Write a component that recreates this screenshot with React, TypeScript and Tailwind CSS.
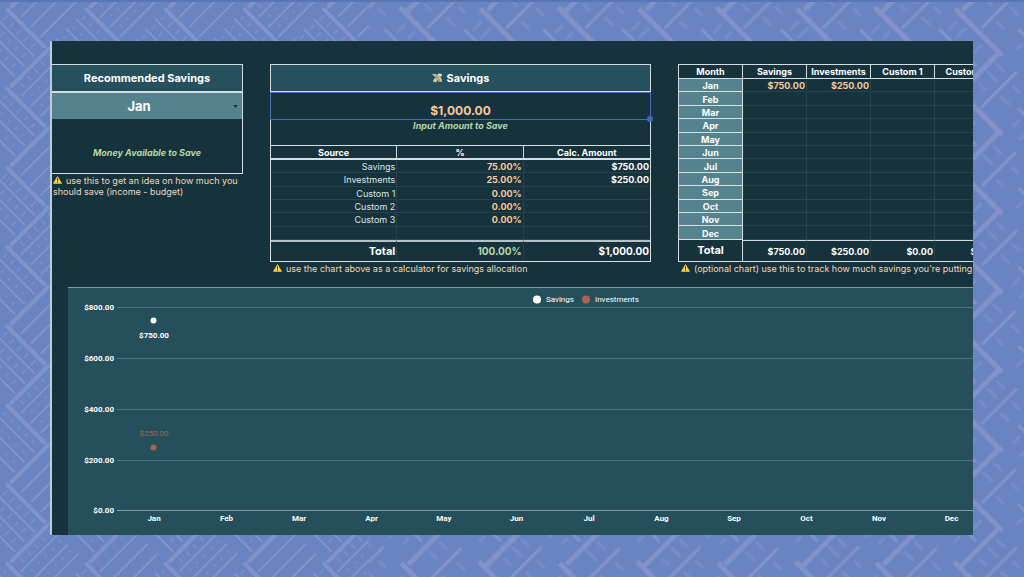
import { useState } from 'react';

const months = ['Jan', 'Feb', 'Mar', 'Apr', 'May', 'Jun', 'Jul', 'Aug', 'Sep', 'Oct', 'Nov', 'Dec'];

type Source = {
    name: string;
    percent: string;
    amount: string;
};

const sources: Source[] = [
    { name: 'Savings', percent: '75.00%', amount: '$750.00' },
    { name: 'Investments', percent: '25.00%', amount: '$250.00' },
    { name: 'Custom 1', percent: '0.00%', amount: '' },
    { name: 'Custom 2', percent: '0.00%', amount: '' },
    { name: 'Custom 3', percent: '0.00%', amount: '' },
    { name: '', percent: '', amount: '' },
];

const trackerColumns = [
    { name: 'Savings', jan: '$750.00', total: '$750.00' },
    { name: 'Investments', jan: '$250.00', total: '$250.00' },
    { name: 'Custom 1', jan: '', total: '$0.00' },
    { name: 'Custom 2', jan: '', total: '$0.00' },
];

const yTicks = [
    { label: '$800.00', y: 19 },
    { label: '$600.00', y: 70 },
    { label: '$400.00', y: 121 },
    { label: '$200.00', y: 172 },
    { label: '$0.00', y: 222 },
];

function WeaveBackground() {
    const bars = [3, 17, 31, 45];
    const steps = [6, 16, 26, 36, 46];

    return (
        <svg className="absolute inset-0 h-full w-full" aria-hidden="true">
            <defs>
                {/* dense weave on the left */}
                <pattern id="weave" width="112" height="112" patternUnits="userSpaceOnUse" patternTransform="translate(8 4) rotate(45)">
                    <g stroke="#8193ca" strokeLinecap="round" fill="none">
                        {bars.map((b, i) => (
                            <g key={b} strokeWidth={i === 0 ? 4 : 2}>
                                <path d={`M2 ${b}H54`} />
                                <path d={`M58 ${b + 56}H110`} />
                                <path d={`M${b + 56} 2V54`} />
                                <path d={`M${b} 58V110`} />
                            </g>
                        ))}
                        {steps.map((s) => (
                            <g key={s} strokeWidth="2" stroke="#7a8fca">
                                <path d={`M${s} 8v5M${s} 22v4M${s} 36v4`} />
                                <path d={`M${s + 56} 65v3M${s + 56} 80v1M${s + 56} 94v1`} />
                                <path d={`M64 ${s}h4M79 ${s}h1M93 ${s}h1`} />
                            </g>
                        ))}
                    </g>
                </pattern>
                {/* wider spacing with short rungs on the right */}
                <pattern id="rungs" width="112" height="112" patternUnits="userSpaceOnUse" patternTransform="translate(8 4) rotate(45)">
                    <g stroke="#8193ca" strokeLinecap="round" fill="none">
                        <path d="M0 4H64M56 60H120M-56 60H8M62 4V56M6 60V110" strokeWidth="5" />
                        <path d="M4 30H54M60 86H110M88 6V54M32 64V110" strokeWidth="3" />
                        <path
                            d="M10 13v10M21 11v12M33 16v8M44 12v10M12 38v8M26 40v10M40 38v7M70 70v9M82 68v7M94 70v8M72 94v7M86 96v8M100 94v6M69 14h9M68 26h12M71 40h7M96 18h8M95 34h10M13 74h9M12 88h11M40 76h9M39 96h8"
                            strokeWidth="3"
                            stroke="#788eca"
                        />
                    </g>
                </pattern>
            </defs>
            <rect width="36%" height="100%" fill="url(#weave)" />
            <rect x="36%" width="64%" height="100%" fill="url(#rungs)" />
        </svg>
    );
}

function WarningIcon() {
    return (
        <svg viewBox="0 0 20 18" className="mr-1 inline-block h-2 w-[9px] align-baseline" aria-hidden="true">
            <path d="M10 1.5 18.8 16.5H1.2Z" fill="#fbd04b" stroke="#fbd04b" strokeWidth="2" strokeLinejoin="round" />
            <path d="M10 6v5" stroke="#33383b" strokeWidth="2.2" strokeLinecap="round" />
            <circle cx="10" cy="14.2" r="1.3" fill="#33383b" />
        </svg>
    );
}

function FlyingMoneyIcon() {
    return (
        <svg viewBox="0 0 24 22" className="h-[10px] w-[11px]" aria-hidden="true">
            <path d="M1 2 9 3l3 5-5 1-2-2 1-1-4-1ZM14 1l8 1-1 5-6 3-3-4Z" fill="#d9dfd2" />
            <path d="M2 17l5-7 5 4-3 7-4-2-1 2ZM15 12l7 3-1 5-6-1-3-4Z" fill="#c4cdb9" />
            <path d="M5 6l5-2 10 11-5 4Z" fill="#91a984" />
            <path d="M10 4l4-1 8 12-4 2ZM5 15 15 5l4 4L9 19Z" fill="#e4bd8c" />
            <path d="M8 7l9 9M9 15l7-8" stroke="#63785f" strokeWidth="1.2" />
        </svg>
    );
}

function SavingsChart() {
    return (
        <svg viewBox="0 0 905 247" className="block w-full font-['Roboto',sans-serif]" role="img" aria-label="Savings and Investments">
            {yTicks.map((tick, i) => (
                <g key={tick.label}>
                    <path d={`M49 ${tick.y}.5H905`} stroke={i === 4 ? '#7f9da3' : '#4a737c'} />
                    <text x="46" y={tick.y + 3} textAnchor="end" className="fill-white text-[8px] font-bold">
                        {tick.label}
                    </text>
                </g>
            ))}
            {months.map((month, i) => (
                <text key={month} x={86 + i * 72.5} y="233" textAnchor="middle" className="fill-white text-[8px] font-bold">
                    {month}
                </text>
            ))}

            <circle cx="469" cy="11.5" r="4" fill="#fff" />
            <text x="478" y="14" className="fill-white text-[8px]">
                Savings
            </text>
            <circle cx="518" cy="11.5" r="4" fill="#ac624b" />
            <text x="527" y="14" className="fill-white text-[8px]">
                Investments
            </text>

            <circle cx="85.5" cy="32.5" r="3" fill="#fff" />
            <text x="86" y="50" textAnchor="middle" className="fill-white text-[8px] font-bold">
                $750.00
            </text>
            <text x="86" y="148" textAnchor="middle" className="fill-[#a3644f] text-[8px]">
                $250.00
            </text>
            <circle cx="85.5" cy="159.5" r="3" fill="#a8624e" />
        </svg>
    );
}

export default function App() {
    const [month, setMonth] = useState('Jan');
    const [amount, setAmount] = useState('$1,000.00');

    return (
        <div className="relative min-h-screen border-t-2 border-[#5876b6] bg-[#6a84c1] pt-[39px] pr-[51px] pb-[42px] pl-[50px] font-[Inter,sans-serif] text-white">
            <WeaveBackground />

            <main className="relative overflow-hidden border-l-2 border-[#bccdd8] bg-[#16323c] pt-[23px]">
                <div className="grid grid-cols-[minmax(0,191fr)_minmax(0,381fr)_minmax(0,295fr)] items-start gap-[27px]">
                    <section>
                        <div className="border-y border-r border-[#d3dfe2]">
                            <label
                                htmlFor="month"
                                className="flex h-7 items-center justify-center border-b-2 border-[#d3dfe2] bg-[#25505c] text-[11px] font-bold"
                            >
                                Recommended Savings
                            </label>
                            <div className="relative">
                                <select
                                    id="month"
                                    value={month}
                                    onChange={(e) => setMonth(e.target.value)}
                                    className="block h-[26px] w-full appearance-none bg-[#54828d] pt-px pr-4 text-center text-[13px] font-bold outline-none"
                                >
                                    {months.map((m) => (
                                        <option key={m}>{m}</option>
                                    ))}
                                </select>
                                <svg viewBox="0 0 6 4" className="pointer-events-none absolute top-3 right-1 h-[3px] w-[5px]" aria-hidden="true">
                                    <path d="M0 0h6L3 4Z" fill="#16323c" />
                                </svg>
                            </div>
                            <p className="flex h-[54px] items-end justify-center pb-3 text-[9px] leading-4 font-bold text-[#b6d7a8] italic">
                                Money Available to Save
                            </p>
                        </div>
                        <p className="px-px pt-px text-[9px] leading-[11px] text-[#f0d9bd]">
                            <WarningIcon />
                            use this to get an idea on how much you should save (income - budget)
                        </p>
                    </section>

                    <section>
                        <div className="border border-[#d3dfe2]">
                            <h2 className="flex h-7 items-center justify-center gap-1 border-b-2 border-[#d3dfe2] bg-[#25505c] text-[11px] font-bold">
                                <FlyingMoneyIcon />
                                Savings
                            </h2>
                            <div className="relative">
                                <input
                                    id="amount"
                                    value={amount}
                                    onChange={(e) => setAmount(e.target.value)}
                                    className="block h-[26px] w-full bg-transparent pt-2 text-center text-[12px] font-bold text-[#f9cb9c] outline-none"
                                />
                                <span className="pointer-events-none absolute -inset-px border border-[#4a6fb5]" />
                                <span className="pointer-events-none absolute -right-[3px] -bottom-[3px] size-[6px] rounded-full bg-[#4568bd]" />
                            </div>
                            <label htmlFor="amount" className="flex h-[26px] justify-center text-[9px] leading-[14px] font-bold text-[#b6d7a8] italic">
                                Input Amount to Save
                            </label>
                            <table className="h-[116px] w-full table-fixed border-separate border-spacing-0 text-right text-[9px] leading-[11px]">
                                <thead>
                                    <tr className="h-[15px] text-center">
                                        <th className="border-t border-r border-b-2 border-[#d3dfe2] p-0">Source</th>
                                        <th className="border-t border-r border-b-2 border-[#d3dfe2] p-0">%</th>
                                        <th className="border-t border-b-2 border-[#d3dfe2] p-0">Calc. Amount</th>
                                    </tr>
                                </thead>
                                <tbody>
                                    {sources.map((source, i) => (
                                        <tr key={i} className="h-[13px]">
                                            <td className="border-r border-b border-[#23444e] p-0 pt-px pr-px text-[#dfe6e8]">{source.name}</td>
                                            <td className="border-r border-b border-[#23444e] p-0 pt-px pr-px font-bold text-[#f9cb9c]">{source.percent}</td>
                                            <td className="border-b border-[#23444e] p-0 pt-px pr-px font-bold">{source.amount}</td>
                                        </tr>
                                    ))}
                                </tbody>
                                <tfoot>
                                    <tr className="h-[21px] text-[10px] font-bold">
                                        <td className="border-t-2 border-r border-t-[#b4c2c6] border-r-[#23444e] p-0 pr-px text-[11px]">Total</td>
                                        <td className="border-t-2 border-r border-t-[#b4c2c6] border-r-[#23444e] p-0 pr-px text-[#b6d7a8]">100.00%</td>
                                        <td className="border-t-2 border-[#b4c2c6] p-0 pr-px">$1,000.00</td>
                                    </tr>
                                </tfoot>
                            </table>
                        </div>
                        <p className="px-[3px] pt-px text-[9px] leading-[11px] text-[#f0d9bd]">
                            <WarningIcon />
                            use the chart above as a calculator for savings allocation
                        </p>
                    </section>

                    <section className="overflow-hidden">
                        <table className="h-[198px] w-[321px] table-fixed border-separate border-spacing-0 border-y border-l border-[#d3dfe2] text-center text-[9px] leading-[11px] font-bold">
                            <thead>
                                <tr className="h-[14px]">
                                    <th className="border-r border-b border-[#d3dfe2] p-0">Month</th>
                                    {trackerColumns.map((column) => (
                                        <th key={column.name} className="border-r border-b border-[#d3dfe2] p-0">
                                            {column.name}
                                        </th>
                                    ))}
                                </tr>
                            </thead>
                            <tbody>
                                {months.map((m) => (
                                    <tr key={m} className="h-[13px]">
                                        <th className="border-r border-b border-[#d3dfe2] bg-[#54828d] p-0 pt-px">{m}</th>
                                        {trackerColumns.map((column) => (
                                            <td key={column.name} className="border-r border-b border-[#23444e] p-0 pt-px pr-px text-right text-[#f9cb9c]">
                                                {m === 'Jan' ? column.jan : ''}
                                            </td>
                                        ))}
                                    </tr>
                                ))}
                            </tbody>
                            <tfoot>
                                <tr className="h-[21px]">
                                    <th className="border-r border-[#d3dfe2] p-0 text-[11px]">Total</th>
                                    {trackerColumns.map((column) => (
                                        <td key={column.name} className="border-t border-r border-t-[#d3dfe2] border-r-[#23444e] p-0 pr-px text-right">
                                            {column.total}
                                        </td>
                                    ))}
                                </tr>
                            </tfoot>
                        </table>
                        <p className="px-[3px] pt-px text-[9px] leading-[11px] whitespace-nowrap text-[#f0d9bd]">
                            <WarningIcon />
                            (optional chart) use this to track how much savings you're putting away
                        </p>
                    </section>
                </div>

                <div className="mt-[13px] ml-4 border-t border-[#7d9ba0] bg-[#25505b]">
                    <SavingsChart />
                </div>
            </main>
        </div>
    );
}
